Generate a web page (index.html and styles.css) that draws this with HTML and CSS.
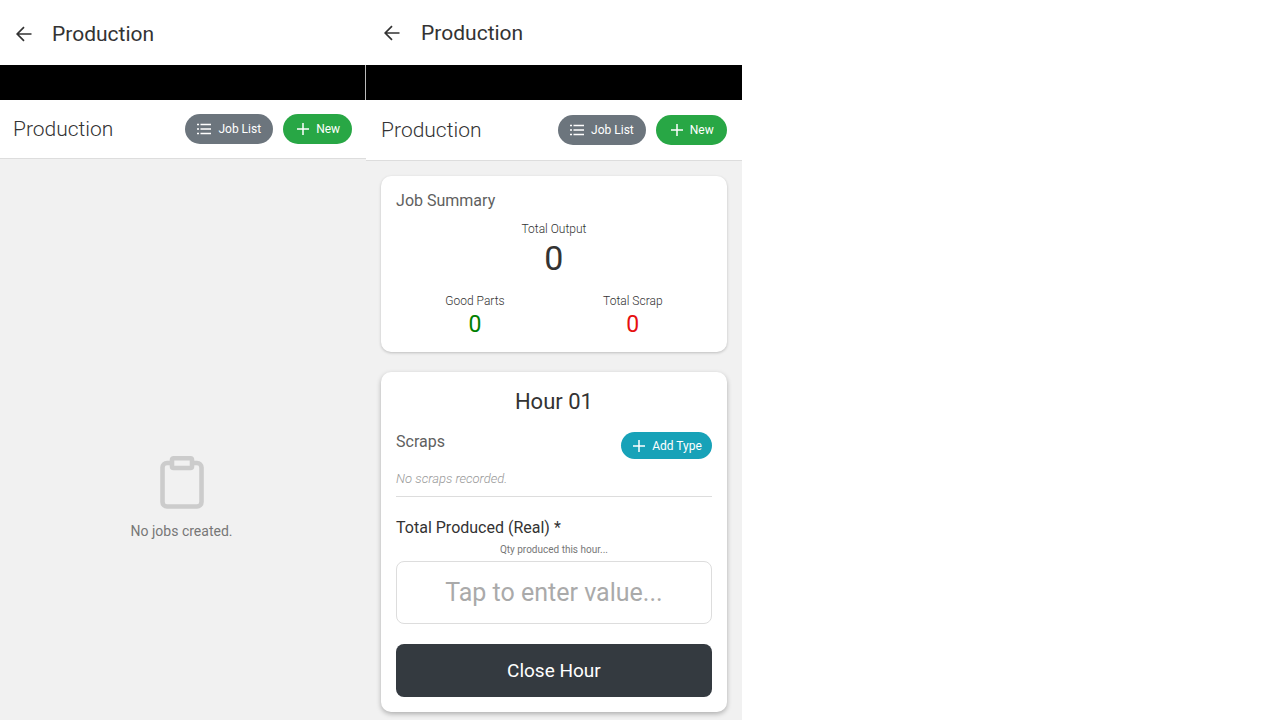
FILE: index.html
```html
<!DOCTYPE html>
<html lang="en">
<head>
<meta charset="utf-8">
<meta name="viewport" content="width=device-width, initial-scale=1">
<title>Production</title>
<link rel="stylesheet" href="styles.css">
</head>
<body>
<svg class="sprite" aria-hidden="true">
  <symbol id="arrow" viewBox="0 0 16 16"><path d="M15.500 8H1.500M8 1.200 1.200 8 8 14.800"/></symbol>
  <symbol id="list" viewBox="0 0 14 12"><path d="M0 1.500h2M0 6h2M0 10.500h2M3.500 1.500h10.500M3.500 6h10.500M3.500 10.500h10.500"/></symbol>
  <symbol id="plus" viewBox="0 0 12 12"><path d="M6 0v12M0 6h12"/></symbol>
</svg>
<main class="screens">
  <section class="screen screen-empty">
    <header class="topbar">
      <button class="back" type="button" aria-label="Back"><svg><use href="#arrow"/></svg></button>
      <h1 class="topbar-title">Production</h1>
    </header>
    <div class="band"></div>
    <div class="toolbar">
      <h2 class="toolbar-title">Production</h2>
      <button class="pill pill-gray" type="button"><svg class="icon-list"><use href="#list"/></svg>Job List</button>
      <button class="pill pill-green" type="button"><svg class="icon-plus"><use href="#plus"/></svg>New</button>
    </div>
    <div class="empty">
      <svg class="clipboard" viewBox="0 0 44 54" aria-hidden="true">
        <path d="M12 7H7a4.500 4.500 0 0 0-4.500 4.500V46A4.500 4.500 0 0 0 7 50.500h30a4.500 4.500 0 0 0 4.500-4.500V11.500A4.500 4.500 0 0 0 37 7h-5"/>
        <rect x="12" y="2.300" width="20" height="9.700" rx="1.500"/>
      </svg>
      <p class="empty-text">No jobs created.</p>
    </div>
  </section>

  <section class="screen screen-job">
    <header class="topbar">
      <button class="back" type="button" aria-label="Back"><svg><use href="#arrow"/></svg></button>
      <h1 class="topbar-title">Production</h1>
    </header>
    <div class="band"></div>
    <div class="toolbar">
      <h2 class="toolbar-title">Production</h2>
      <button class="pill pill-gray" type="button"><svg class="icon-list"><use href="#list"/></svg>Job List</button>
      <button class="pill pill-green" type="button"><svg class="icon-plus"><use href="#plus"/></svg>New</button>
    </div>
    <div class="cards">
      <article class="card">
        <h3 class="section-title">Job Summary</h3>
        <div class="stat">
          <span class="stat-label">Total Output</span>
          <span class="stat-total">0</span>
        </div>
        <div class="split">
          <div class="stat">
            <span class="stat-label">Good Parts</span>
            <span class="stat-value good">0</span>
          </div>
          <div class="stat">
            <span class="stat-label">Total Scrap</span>
            <span class="stat-value scrap">0</span>
          </div>
        </div>
      </article>
      <article class="card card-hour">
        <h3 class="hour-title">Hour 01</h3>
        <div class="scraps">
          <h4 class="section-title">Scraps</h4>
          <button class="pill pill-teal" type="button"><svg class="icon-plus"><use href="#plus"/></svg>Add Type</button>
        </div>
        <p class="no-scraps">No scraps recorded.</p>
        <label class="field-label" for="qty">Total Produced (Real) *</label>
        <p class="hint" id="qty-hint">Qty produced this hour...</p>
        <input class="qty" id="qty" type="text" inputmode="numeric" aria-describedby="qty-hint" placeholder="Tap to enter value...">
        <button class="close-hour" type="button">Close Hour</button>
      </article>
    </div>
  </section>
</main>
</body>
</html>
```
FILE: styles.css
```css
* { box-sizing: border-box; }
body {
  margin: 0;
  background: #fff;
  color: #333;
  font-family: Roboto, "Noto Sans", sans-serif;
}
h1, h2, h3, h4, p { margin: 0; font-weight: 400; }
button, input { font: inherit; }
button { border: 0; cursor: pointer; }
svg { fill: none; stroke: currentColor; }
.sprite { position: absolute; width: 0; height: 0; }

.screens { display: flex; min-height: 100vh; }
.screen { display: flex; flex-direction: column; background: #f1f1f1; }
.screen-empty { width: 28.6%; }
.screen-job { width: 29.35%; }

.topbar {
  display: flex;
  align-items: center;
  gap: 20px;
  height: 65px;
  padding: 3px 16px 0;
  background: #fff;
}
.screen-job .topbar { padding-top: 1px; gap: 21px; padding-left: 18px; }
.back { display: flex; padding: 0; background: none; color: #333; }
.back svg { width: 16px; height: 16px; stroke-width: 1.700; }
.topbar-title { font-size: 21px; line-height: 24px; }
.band { height: 35px; background: #000; }
.screen-empty .band { border-right: 1px solid #bbb; }

.toolbar {
  display: flex;
  align-items: center;
  gap: 10px;
  height: 59px;
  padding: 0 14px 0 13px;
  background: #fff;
  border-bottom: 1px solid #ddd;
}
.screen-job .toolbar { height: 61px; padding-left: 15px; padding-right: 15px; }
.toolbar-title { flex: 1; font-size: 21px; line-height: 24px; font-weight: 300; }

.pill {
  display: flex;
  align-items: center;
  gap: 7px;
  height: 30px;
  padding: 0 12px;
  border-radius: 15px;
  color: #fff;
  font-size: 12px;
  white-space: nowrap;
}
.pill-gray { background: #6c757d; }
.pill-green { background: #28a745; padding: 0 12px 0 14px; }
.screen-job .pill-green { padding: 0 13px 0 15px; }
.pill-teal { background: #17a2b8; height: 27px; padding: 0 10px 0 12px; }
.icon-list { width: 14px; height: 12px; stroke-width: 1.500; }
.icon-plus { width: 12px; height: 12px; stroke-width: 1.500; }

.empty {
  display: flex;
  flex-direction: column;
  align-items: center;
  gap: 12px;
  padding: 297px 3px 0 0;
}
.clipboard { width: 44px; height: 54px; color: #ccc; stroke-width: 4.600; }
.empty-text { font-size: 14px; line-height: 18px; color: #777; }

.cards { display: flex; flex-direction: column; gap: 20px; padding: 15px 15px 8px; }
.card {
  display: flex;
  flex-direction: column;
  padding: 15px;
  background: #fff;
  border-radius: 10px;
  box-shadow: 0 1px 3px rgba(0, 0, 0, .22);
}
.card-hour { box-shadow: 0 2px 5px rgba(0, 0, 0, .28); }
.section-title { font-size: 16px; line-height: 20px; color: #5f5f5f; }
.stat { display: flex; flex-direction: column; align-items: center; gap: 4px; }
.card > .stat { margin-top: 10px; }
.stat-label { font-size: 12px; line-height: 16px; font-weight: 300; color: #333; }
.stat-total { font-size: 34px; line-height: 34px; }
.stat-value { font-size: 23px; line-height: 24px; }
.good { color: #008000; }
.scrap { color: #e60f0f; }
.split { display: grid; grid-template-columns: 1fr 1fr; margin-top: 18px; }

.hour-title { padding-top: 1px; font-size: 22px; line-height: 28px; text-align: center; }
.scraps { display: flex; justify-content: space-between; align-items: flex-start; margin-top: 16px; }
.no-scraps {
  margin-top: 12px;
  padding-bottom: 9px;
  border-bottom: 1px solid #ddd;
  font-size: 13px;
  line-height: 16px;
  font-style: italic;
  font-weight: 300;
  color: #999;
}
.field-label { margin-top: 21px; font-size: 16px; line-height: 20px; }
.hint { margin-top: 5px; font-size: 10px; line-height: 14px; text-align: center; color: #777; }
.qty {
  width: 100%;
  height: 63px;
  margin-top: 4px;
  padding: 0 12px;
  border: 1px solid #ddd;
  border-radius: 8px;
  background: #fff;
  color: #333;
  font-size: 25px;
  text-align: center;
}
.qty::placeholder { color: #aaa; opacity: 1; }
.close-hour {
  height: 53px;
  margin-top: 20px;
  border-radius: 8px;
  background: #343a40;
  color: #fff;
  font-size: 19px;
}
```
